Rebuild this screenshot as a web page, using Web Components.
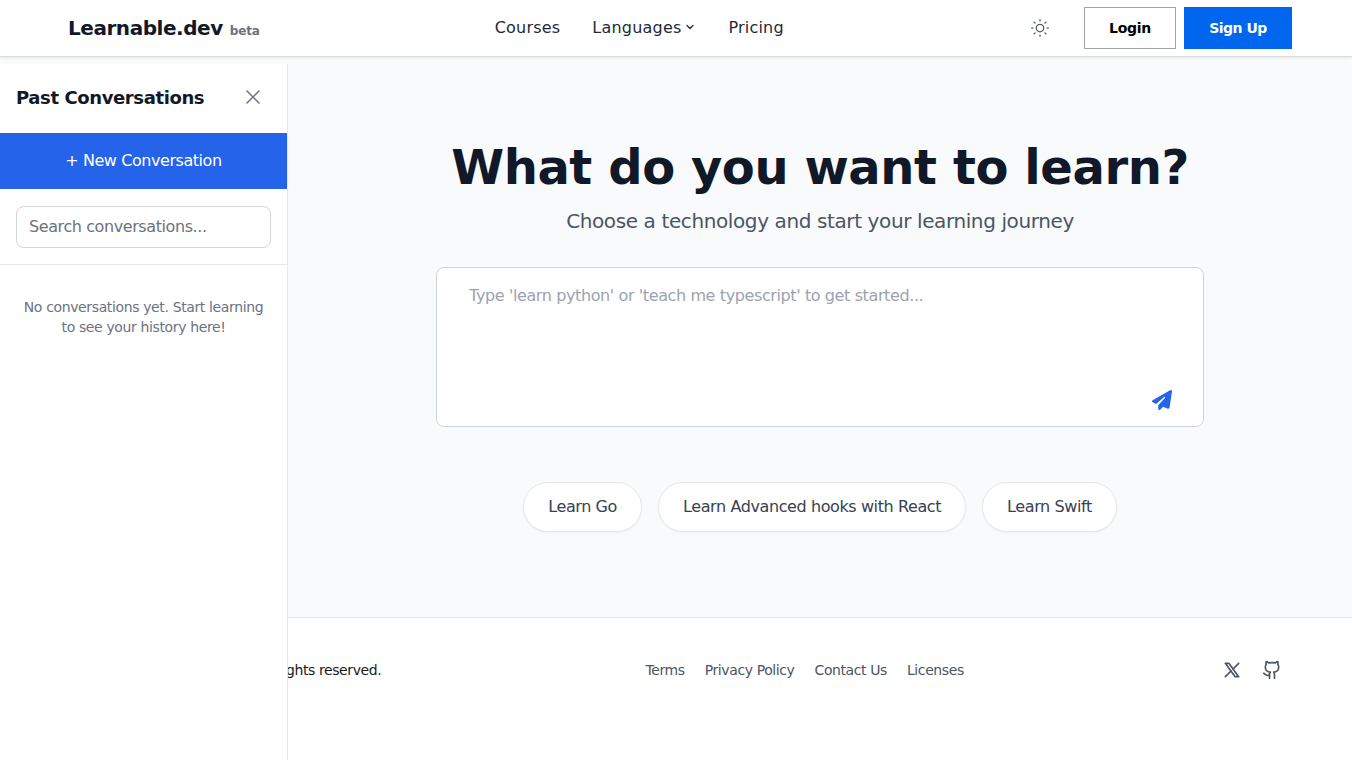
<!DOCTYPE html>
<html>
<head>
<meta charset="utf-8">
<title>Learnable.dev</title>
<style>
  html, body { margin: 0; height: 100%; }
  body {
    background: #f9fafb;
    font-family: "DejaVu Sans", sans-serif;
    overflow: hidden;
  }
</style>
</head>
<body>
<site-navbar></site-navbar>
<chat-sidebar></chat-sidebar>
<hero-section></hero-section>
<site-footer></site-footer>

<script>
class SiteNavbar extends HTMLElement {
  connectedCallback() {
    this.attachShadow({ mode: "open" });
    this.shadowRoot.innerHTML = `
      <style>
        :host {
          display: block;
          position: relative;
          z-index: 20;
          background: #fff;
          height: 57px;
          box-sizing: border-box;
          border-bottom: 1px solid #d9dadc;
          box-shadow: 0 1px 3px rgba(0,0,0,0.08);
        }
        nav {
          height: 56px;
          display: flex;
          align-items: center;
          justify-content: space-between;
          padding: 0 60px 0 68px;
        }
        .logo { display: flex; align-items: baseline; gap: 7px; color: #111827; font-weight: 700; font-size: 20px; letter-spacing: -0.45px; }
        .logo small { font-size: 12px; color: #6b7280; font-weight: 700; letter-spacing: -0.2px; }
        .links { display: flex; gap: 32px; align-items: center; font-size: 16px; color: #1f2937; letter-spacing: 0.2px; margin-right: 11px; padding-bottom: 2px; }
        .links span { display: flex; align-items: center; gap: 3px; }
        .actions { display: flex; align-items: center; }
        .sun { display: flex; margin-right: 34px; color: #4b5563; }
        button {
          font: 700 14px "DejaVu Sans", sans-serif;
          height: 42px;
          padding: 0;
          cursor: pointer;
        }
        .login { width: 92px; background: #fff; color: #000; border: 1px solid #a3a3a3; margin-right: 8px; letter-spacing: -0.3px; }
        .signup { width: 108px; background: #0066ee; color: #fff; border: 0; letter-spacing: -0.5px; }
      </style>
      <nav>
        <div class="logo">Learnable.dev <small>beta</small></div>
        <div class="links">
          <span>Courses</span>
          <span>Languages
            <svg width="12" height="12" viewBox="0 0 24 24" fill="none" stroke="currentColor" stroke-width="2.5" stroke-linecap="round" stroke-linejoin="round"><path d="M6 9l6 6 6-6"/></svg>
          </span>
          <span>Pricing</span>
        </div>
        <div class="actions">
          <span class="sun">
            <svg width="20" height="20" viewBox="0 0 24 24" fill="none" stroke="currentColor" stroke-width="1.5" stroke-linecap="round"><circle cx="12" cy="12" r="4.5"/><path d="M12 2v1.5M12 20.5V22M4.9 4.9L6 6M18 18l1.1 1.1M2 12h1.5M20.5 12H22M4.9 19.1L6 18M18 6l1.1-1.1"/></svg>
          </span>
          <button class="login">Login</button>
          <button class="signup">Sign Up</button>
        </div>
      </nav>
    `;
  }
}

class ChatSidebar extends HTMLElement {
  connectedCallback() {
    this.attachShadow({ mode: "open" });
    this.shadowRoot.innerHTML = `
      <style>
        /* panel lies over the page, same as the real drawer */
        :host {
          display: flex;
          flex-direction: column;
          position: fixed;
          top: 64px;
          left: 0;
          bottom: 0;
          width: 288px;
          box-sizing: border-box;
          background: #fff;
          border-right: 1px solid #e5e7eb;
          z-index: 10;
        }
        .head {
          height: 69px;
          box-sizing: border-box;
          padding: 0 26px 4px 16px;
          display: flex;
          align-items: center;
          justify-content: space-between;
          font-size: 18px;
          font-weight: 700;
          color: #111827;
          letter-spacing: -0.39px;
        }
        .head span { position: relative; top: 1px; }
        .head svg { display: block; color: #6b7280; }
        .new {
          height: 56px;
          box-sizing: border-box;
          padding-bottom: 2px;
          display: flex;
          align-items: center;
          justify-content: center;
          background: #2563eb;
          color: #fff;
          font-size: 16px;
          letter-spacing: -0.44px;
        }
        .search {
          padding: 17px 16px 16px;
          border-bottom: 1px solid #e5e7eb;
        }
        .search div {
          height: 42px;
          box-sizing: border-box;
          display: flex;
          align-items: center;
          padding: 0 12px 2px;
          border: 1px solid #d1d5db;
          border-radius: 8px;
          color: #6b7280;
          font-size: 16px;
          letter-spacing: -0.41px;
        }
        .empty {
          padding: 32px 16px 0;
          text-align: center;
          color: #6b7280;
          font-size: 14px;
          line-height: 20px;
          letter-spacing: -0.37px;
        }
      </style>
      <div class="head">
        <span>Past Conversations</span>
        <svg width="16" height="16" viewBox="0 0 16 16" fill="none" stroke="currentColor" stroke-width="1.5" stroke-linecap="round"><path d="M2 2l12 12M14 2L2 14"/></svg>
      </div>
      <div class="new">+ New Conversation</div>
      <div class="search"><div>Search conversations...</div></div>
      <div class="empty">No conversations yet. Start learning to see your history here!</div>
    `;
  }
}

class SuggestChip extends HTMLElement {
  connectedCallback() {
    this.attachShadow({ mode: "open" });
    this.shadowRoot.innerHTML = `
      <style>
        :host {
          display: flex;
          align-items: center;
          height: 50px;
          box-sizing: border-box;
          padding: 0 24px 2px;
          background: #fff;
          border: 1px solid #e5e7eb;
          border-radius: 25px;
          box-shadow: 0 1px 2px rgba(0,0,0,0.05);
          color: #374151;
          font-size: 16px;
          letter-spacing: -0.4px;
        }
      </style>
      <slot></slot>
    `;
  }
}

class HeroSection extends HTMLElement {
  connectedCallback() {
    this.attachShadow({ mode: "open" });
    this.shadowRoot.innerHTML = `
      <style>
        :host {
          display: flex;
          flex-direction: column;
          align-items: center;
          height: 560px;
          box-sizing: border-box;
          padding: 80px 0 0 288px;
        }
        h1 { margin: 0; font-size: 48px; line-height: 60px; font-weight: 700; color: #111827; letter-spacing: -0.42px; }
        p { margin: 10px 0 0; font-size: 20px; line-height: 28px; color: #4b5563; letter-spacing: -0.39px; }
        .box {
          margin-top: 32px;
          width: 768px;
          height: 160px;
          box-sizing: border-box;
          background: #fff;
          border: 1px solid #d1d5db;
          border-radius: 8px;
          padding: 18px 32px 16px;
          display: flex;
          flex-direction: column;
          justify-content: space-between;
          color: #9ca3af;
          font-size: 16px;
          line-height: 20px;
          letter-spacing: -0.39px;
        }
        .box svg { align-self: flex-end; margin-right: -1px; color: #2563eb; }
        .chips { margin-top: 55px; display: flex; gap: 16px; }
      </style>
      <h1>What do you want to learn?</h1>
      <p>Choose a technology and start your learning journey</p>
      <div class="box">
        <span>Type 'learn python' or 'teach me typescript' to get started...</span>
        <svg width="20" height="20" viewBox="0 0 512 512" fill="currentColor"><path d="M498.1 5.6c10.1 7 15.4 19.1 13.5 31.2l-64 416c-1.5 9.7-7.4 18.2-16 23s-18.9 5.4-28 1.6L284 427.7l-68.5 74.1c-8.9 9.7-22.9 12.9-35.2 8.1S160 493.2 160 480V396.4c0-4 1.5-7.8 4.2-10.7L331.8 202.8c5.8-6.3 5.6-16-.4-22s-15.7-6.4-22-.7L106 360.8 17.7 316.6C7.1 311.3 .3 300.7 0 288.9s5.9-22.8 16.1-28.7l448-256c10.7-6.1 23.9-5.5 34 1.4z"/></svg>
      </div>
      <div class="chips">
        <suggest-chip>Learn Go</suggest-chip>
        <suggest-chip>Learn Advanced hooks with React</suggest-chip>
        <suggest-chip>Learn Swift</suggest-chip>
      </div>
    `;
  }
}

class SiteFooter extends HTMLElement {
  connectedCallback() {
    this.attachShadow({ mode: "open" });
    this.shadowRoot.innerHTML = `
      <style>
        :host {
          display: block;
          height: 143px;
          box-sizing: border-box;
          background: #fff;
          border-top: 1px solid #e5e7eb;
        }
        footer {
          display: flex;
          align-items: center;
          justify-content: space-between;
          padding: 42px 70px 0 100px;
          height: 20px;
          font-size: 14px;
          line-height: 20px;
          letter-spacing: -0.4px;
        }
        .copy { color: #1a1a1a; white-space: nowrap; }
        .links { display: flex; gap: 20px; color: #4b5563; margin-left: 6px; }
        .social { display: flex; gap: 20px; color: #4b5563; }
        svg { display: block; }
      </style>
      <footer>
        <span class="copy">© 2025 Learnable.dev. All rights reserved.</span>
        <div class="links">
          <span>Terms</span><span>Privacy Policy</span><span>Contact Us</span><span>Licenses</span>
        </div>
        <div class="social">
          <svg width="20" height="20" viewBox="0 0 24 24" fill="none" stroke="currentColor" stroke-width="2" stroke-linecap="round" stroke-linejoin="round"><path d="M4 4l11.733 16h4.267l-11.733-16z"/><path d="M4 20l6.768-6.768m2.46-2.46L20 4"/></svg>
          <svg width="20" height="20" viewBox="0 0 24 24" fill="none" stroke="currentColor" stroke-width="2" stroke-linecap="round" stroke-linejoin="round"><path d="M15 22v-4a4.8 4.8 0 0 0-1-3.5c3 0 6-2 6-5.5.08-1.25-.27-2.48-1-3.5.28-1.15.28-2.35 0-3.5 0 0-1 0-3 1.5-2.64-.5-5.36-.5-8 0C6 2 5 2 5 2c-.3 1.15-.3 2.35 0 3.5A5.4 5.4 0 0 0 4 9c0 3.5 3 5.5 6 5.5-.39.49-.68 1.05-.85 1.65-.17.6-.22 1.23-.15 1.85v4"/><path d="M9 18c-4.51 2-5-2-7-2"/></svg>
        </div>
      </footer>
    `;
  }
}

customElements.define("site-navbar", SiteNavbar);
customElements.define("chat-sidebar", ChatSidebar);
customElements.define("suggest-chip", SuggestChip);
customElements.define("hero-section", HeroSection);
customElements.define("site-footer", SiteFooter);
</script>
</body>
</html>
